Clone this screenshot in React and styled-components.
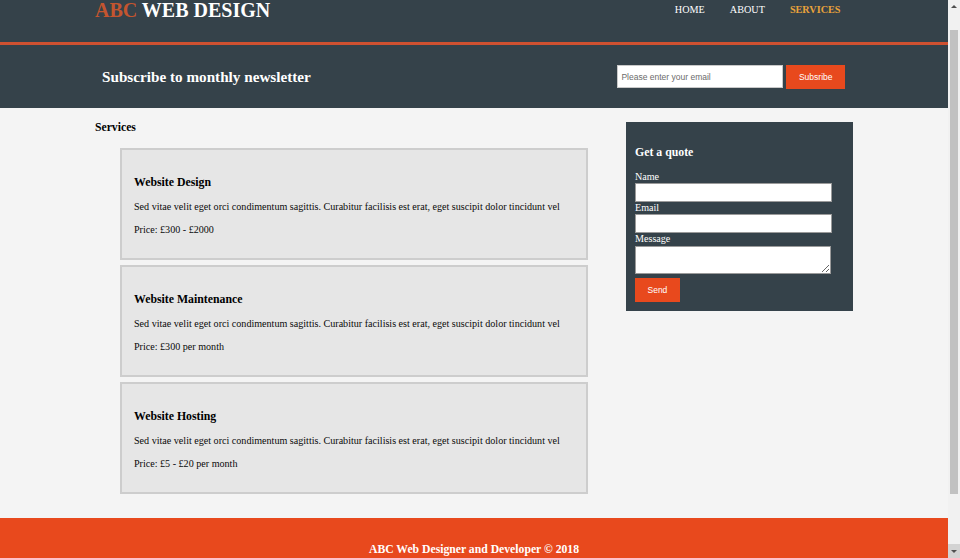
import React from "react";
import styled, { createGlobalStyle } from "styled-components";

const GlobalStyle = createGlobalStyle`
  html, body {
    margin: 0;
    padding: 0;
    overflow: hidden;
    background: #f4f4f4;
    font-family: "Liberation Serif", "Times New Roman", serif;
  }
  * { box-sizing: border-box; }
`;

const DARK = "#35424a";
const ORANGE = "#e8491d";

const Viewport = styled.div`
  display: flex;
  width: 960px;
  height: 558px;
  overflow: hidden;
`;

const Page = styled.div`
  width: 948px;
  height: 558px;
  overflow: hidden;
  background: #f4f4f4;
  display: flex;
  flex-direction: column;
`;

const Container = styled.div`
  width: 758px;
  margin: 0 auto;
  display: flex;
  justify-content: space-between;
  align-items: flex-start;
`;

const Header = styled.header`
  flex: none;
  height: 45px;
  background: ${DARK};
  border-bottom: 3px solid #cf5131;
`;

const Logo = styled.h1`
  margin: 1px 0 0;
  font-size: 20px;
  line-height: 18px;
  font-weight: bold;
  color: #ffffff;
  white-space: nowrap;
`;

const Highlight = styled.span`
  color: #c4552f;
`;

const Nav = styled.ul`
  display: flex;
  margin: 4px 0 0;
  padding: 0;
  list-style: none;
`;

const NavItem = styled.li`
  padding: 0 12.5px;
  font-size: 10.2px;
  line-height: 12px;
  text-transform: uppercase;
  color: ${(p) => (p.$current ? "#e9a23b" : "#ffffff")};
  font-weight: ${(p) => (p.$current ? "bold" : "normal")};
`;

const Newsletter = styled.section`
  flex: none;
  height: 63px;
  background: ${DARK};
  padding-top: 20px;
`;

const NewsTitle = styled.h1`
  margin: 3px 0 0 7px;
  font-size: 15.2px;
  line-height: 18px;
  font-weight: bold;
  color: #ffffff;
`;

const NewsForm = styled.form`
  display: flex;
  align-items: flex-start;
  gap: 3px;
  margin-right: 8px;
`;

const EmailInput = styled.input`
  width: 166px;
  height: 23px;
  padding: 0 3px;
  border: 1px solid #c9c9c9;
  background: #ffffff;
  font-family: "Liberation Sans", Arial, sans-serif;
  font-size: 8.5px;
  color: #333;
  outline: none;
  &::placeholder { color: #6b6b6b; }
`;

const OrangeButton = styled.button`
  height: 24px;
  padding: 0 12.5px;
  border: 0;
  background: ${ORANGE};
  color: #ffffff;
  font-family: "Liberation Sans", Arial, sans-serif;
  font-size: 8.5px;
  margin-top: ${(p) => p.$mt || 0}px;
  cursor: pointer;
`;

const Main = styled(Container)`
  flex: none;
`;

const MainCol = styled.section`
  width: 493px;
`;

const PageTitle = styled.h3`
  margin: 13px 0 13px;
  font-size: 11.7px;
  line-height: 14px;
  font-weight: bold;
  color: #000;
`;

const ServiceList = styled.ul`
  margin: 0;
  padding: 0 0 0 25px;
  list-style: none;
`;

const ServiceCard = styled.li`
  height: 112px;
  margin-bottom: 5px;
  padding: 11px 12px;
  border: 2px solid #cdcdcd;
  background: #e6e6e6;
`;

const CardTitle = styled.h3`
  margin: 14px 0 12px;
  font-size: 11.8px;
  line-height: 14px;
  font-weight: bold;
  color: #000;
`;

const CardText = styled.p`
  margin: 0 0 11px;
  font-size: 10.1px;
  line-height: 12px;
  color: #0a0a0a;
  white-space: nowrap;
`;

const Sidebar = styled.aside`
  width: 227px;
  margin-top: 14px;
`;

const QuoteBox = styled.div`
  background: ${DARK};
  color: #ffffff;
  padding: 9px;
`;

const QuoteTitle = styled.h3`
  margin: 14px 0 12px;
  font-size: 11.8px;
  line-height: 14px;
  font-weight: bold;
`;

const FieldLabel = styled.label`
  display: block;
  font-size: 10.1px;
  line-height: 12px;
`;

const Field = styled.input`
  display: block;
  width: 197px;
  height: 19px;
  border: 1px solid #9a9a9a;
  background: #fff;
  padding: 0 3px;
  outline: none;
`;

const MessageField = styled.textarea`
  display: block;
  width: 196px;
  height: 28px;
  margin-top: 1px;
  border: 1px solid #9a9a9a;
  background: #fff;
  padding: 3px;
  outline: none;
`;

const Footer = styled.footer`
  flex: none;
  margin-top: 19px;
  padding: 25px 0;
  background: ${ORANGE};
  color: #ffffff;
  text-align: center;
`;

const FooterText = styled.p`
  margin: 0;
  font-size: 11.7px;
  line-height: 14px;
  font-weight: bold;
`;

const Scrollbar = styled.div`
  width: 12px;
  height: 558px;
  background: #f1f1f1;
  display: flex;
  flex-direction: column;
  align-items: center;
`;

const ScrollArrow = styled.div`
  width: 12px;
  height: ${(p) => (p.$down ? 14 : 12)}px;
  background: ${(p) => (p.$down ? "#d3d3d3" : "#f1f1f1")};
  display: flex;
  align-items: center;
  justify-content: center;
  &::after {
    content: "";
    width: 0;
    height: 0;
    border-left: 3px solid transparent;
    border-right: 3px solid transparent;
    ${(p) =>
      p.$down
        ? "border-top: 3px solid #505050;"
        : "border-bottom: 3px solid #505050;"}
  }
`;

const Track = styled.div`
  flex: 1;
  width: 12px;
  padding: 18px 2px 50px;
  display: flex;
`;

const Thumb = styled.div`
  flex: 1;
  background: #c1c1c1;
`;

const services = [
  { title: "Website Design", price: "Price: £300 - £2000" },
  { title: "Website Maintenance", price: "Price: £300 per month" },
  { title: "Website Hosting", price: "Price: £5 - £20 per month" },
];

const LOREM =
  "Sed vitae velit eget orci condimentum sagittis. Curabitur facilisis est erat, eget suscipit dolor tincidunt vel";

export default function App() {
  return (
    <>
      <GlobalStyle />
      <Viewport>
        <Page>
          <Header>
            <Container>
              <Logo>
                <Highlight>ABC</Highlight> WEB DESIGN
              </Logo>
              <Nav>
                <NavItem>Home</NavItem>
                <NavItem>About</NavItem>
                <NavItem $current>Services</NavItem>
              </Nav>
            </Container>
          </Header>
          <Newsletter>
            <Container>
              <NewsTitle>Subscribe to monthly newsletter</NewsTitle>
              <NewsForm onSubmit={(e) => e.preventDefault()}>
                <EmailInput type="email" placeholder="Please enter your email" />
                <OrangeButton type="submit">Subsribe</OrangeButton>
              </NewsForm>
            </Container>
          </Newsletter>
          <Main>
            <MainCol>
              <PageTitle>Services</PageTitle>
              <ServiceList>
                {services.map((s) => (
                  <ServiceCard key={s.title}>
                    <CardTitle>{s.title}</CardTitle>
                    <CardText>{LOREM}</CardText>
                    <CardText>{s.price}</CardText>
                  </ServiceCard>
                ))}
              </ServiceList>
            </MainCol>
            <Sidebar>
              <QuoteBox>
                <QuoteTitle>Get a quote</QuoteTitle>
                <form onSubmit={(e) => e.preventDefault()}>
                  <FieldLabel>Name</FieldLabel>
                  <Field type="text" />
                  <FieldLabel>Email</FieldLabel>
                  <Field type="email" />
                  <FieldLabel>Message</FieldLabel>
                  <MessageField />
                  <OrangeButton type="submit" $mt={4}>
                    Send
                  </OrangeButton>
                </form>
              </QuoteBox>
            </Sidebar>
          </Main>
          <Footer>
            <FooterText>ABC Web Designer and Developer © 2018</FooterText>
          </Footer>
        </Page>
        <Scrollbar>
          <ScrollArrow />
          <Track>
            <Thumb />
          </Track>
          <ScrollArrow $down />
        </Scrollbar>
      </Viewport>
    </>
  );
}
